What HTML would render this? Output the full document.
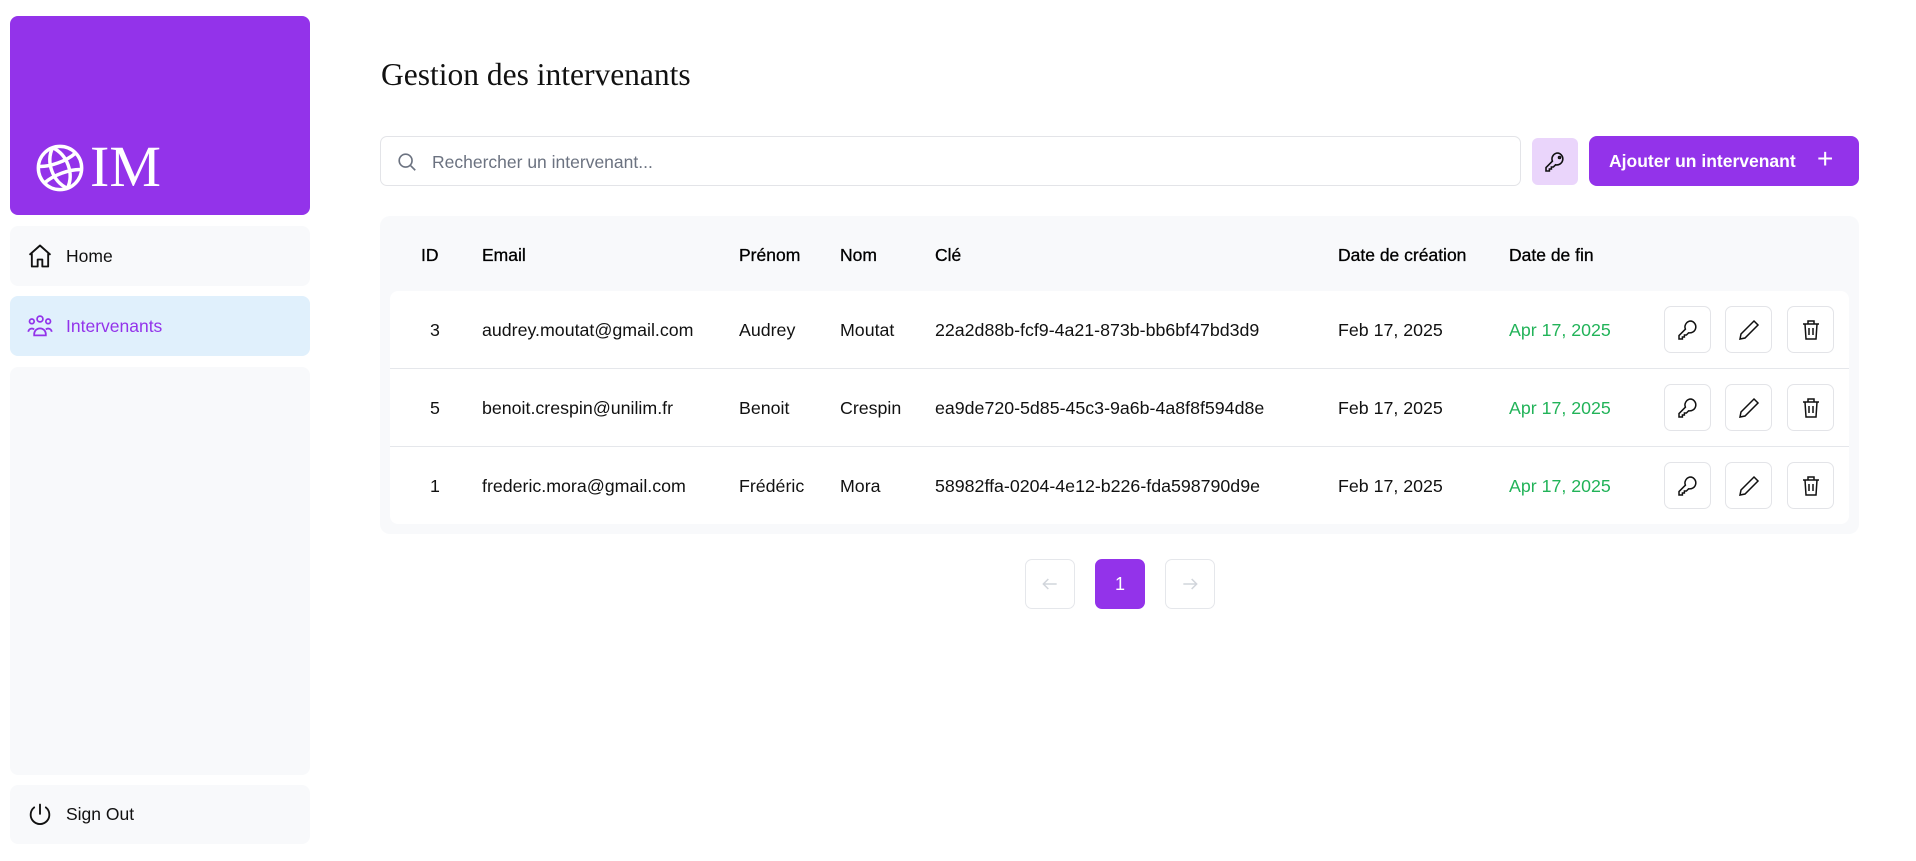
<!DOCTYPE html>
<html><head><meta charset="utf-8"><style>
*{box-sizing:border-box;margin:0;padding:0}
body{width:1916px;height:861px;background:#fff;font-family:"Liberation Sans",sans-serif;color:#111;position:relative;overflow:hidden}
.a{position:absolute}
.card{position:absolute;left:10px;width:300px;background:#f8f9fb;border-radius:8px}
.nav{display:flex;align-items:center;padding-left:16px;font-size:17.5px;gap:12px}
.th{position:absolute;top:245px;font-size:17.5px;color:#000;-webkit-text-stroke:0.3px #000}
.row{position:absolute;left:390px;width:1459px;height:78px;background:#fff;font-size:17.8px}
.row span{position:absolute;top:29px}
.ab{position:absolute;top:15px;width:47px;height:47px;border:1px solid #e3e4e8;border-radius:7px;display:flex;align-items:center;justify-content:center}
.g{color:#22b359}
.pg{position:absolute;top:559px;width:50px;height:50px;border:1px solid #e5e7eb;border-radius:7px;display:flex;align-items:center;justify-content:center}
</style></head><body>
<div class="a" style="left:10px;top:16px;width:300px;height:199px;background:#9333ea;border-radius:8px">
<svg class="a" style="left:24px;top:126px" width="52" height="52" viewBox="0 0 24 24" fill="none" stroke="#fff" stroke-width="1.6"><circle cx="12" cy="12" r="10"/><path d="M12 2c-3 3-4 6.5-4 10s1 7 4 10M12 2c3 3 4 6.5 4 10s-1 7-4 10M3 8c5 2 13 2 18 0M3 16c5-2 13-2 18 0" transform="rotate(-20 12 12)"/></svg>
<div class="a" style="left:80px;top:118px;font-family:'Liberation Serif',serif;font-size:58px;color:#fff;line-height:66px">IM</div>
</div>
<div class="card nav" style="top:226px;height:60px">
<svg width="28" height="28" viewBox="0 0 24 24" fill="none" stroke="#111" stroke-width="1.6" stroke-linejoin="round"><path d="M3 11L12 3l9 8M5 9v12h5v-6h4v6h5V9"/></svg>Home</div>
<div class="card nav" style="top:296px;height:60px;background:#e0f0fc;color:#9333ea">
<svg width="28" height="28" viewBox="0 0 24 24" fill="none" stroke="#9333ea" stroke-width="1.5"><circle cx="12" cy="6" r="2.5"/><circle cx="5" cy="8" r="2"/><circle cx="19" cy="8" r="2"/><path d="M7 19a5 5 0 0110 0v1H7zM2 17a3 3 0 015-2M22 17a3 3 0 00-5-2"/></svg>Intervenants</div>
<div class="card" style="top:367px;height:408px"></div>
<div class="card nav" style="top:785px;height:59px">
<svg width="28" height="28" viewBox="0 0 24 24" fill="none" stroke="#111" stroke-width="1.6" stroke-linecap="round"><path d="M12 3v8M7 5.5a8 8 0 1010 0"/></svg>Sign Out</div>

<div class="a" style="left:381px;top:57px;font-family:'Liberation Serif',serif;font-size:31.5px;color:#111">Gestion des intervenants</div>
<div class="a" style="left:380px;top:136px;width:1141px;height:50px;border:1px solid #e3e4e8;border-radius:7px;font-size:17.5px;color:#6b7280;padding:15px 0 0 51px">Rechercher un intervenant...
<svg class="a" style="left:15px;top:14px" width="22" height="22" viewBox="0 0 24 24" fill="none" stroke="#6b7280" stroke-width="1.8"><circle cx="10.5" cy="10.5" r="7"/><path d="M16 16l5 5"/></svg></div>
<div class="a" style="left:1532px;top:138px;width:46px;height:47px;background:#ead5fb;border-radius:6px;display:flex;align-items:center;justify-content:center">
<svg width="24" height="24" viewBox="0 0 24 24" fill="none" stroke="#111" stroke-width="1.6"><path d="M15 3a6 6 0 00-5.6 8.2L3 17.6V21h3.4v-2h2v-2h2l2.2-2.2A6 6 0 1015 3z"/><circle cx="16.5" cy="7.5" r="1"/></svg></div>
<div class="a" style="left:1589px;top:136px;width:270px;height:50px;background:#9333ea;border-radius:8px;color:#fff;font-size:17.5px;font-weight:bold;padding:15px 0 0 20px">Ajouter un intervenant<span class="a" style="left:228px;top:7px;font-size:28px;font-weight:normal">+</span></div>

<div class="a" style="left:380px;top:216px;width:1479px;height:318px;background:#f8f9fb;border-radius:10px"></div>
<div class="th" style="left:421px">ID</div><div class="th" style="left:482px">Email</div><div class="th" style="left:739px">Prénom</div><div class="th" style="left:840px">Nom</div><div class="th" style="left:935px">Clé</div><div class="th" style="left:1338px">Date de création</div><div class="th" style="left:1509px">Date de fin</div>

<div class="row" style="top:291px;border-radius:8px 8px 0 0;border-bottom:1px solid #e5e7eb"><span style="left:40px">3</span><span style="left:92px">audrey.moutat@gmail.com</span><span style="left:349px">Audrey</span><span style="left:450px">Moutat</span><span style="left:545px">22a2d88b-fcf9-4a21-873b-bb6bf47bd3d9</span><span style="left:948px">Feb 17, 2025</span><span class="g" style="left:1119px">Apr 17, 2025</span>
<div class="ab" style="left:1274px"><svg width="24" height="24" viewBox="0 0 24 24" fill="none" stroke="#111" stroke-width="1.5"><path d="M15 3a6 6 0 00-5.6 8.2L3 17.6V21h3.4v-2h2v-2h2l2.2-2.2A6 6 0 1015 3z"/></svg></div><div class="ab" style="left:1335px"><svg width="24" height="24" viewBox="0 0 24 24" fill="none" stroke="#111" stroke-width="1.5"><path d="M17 3l4 4L8 20l-5 1 1-5z"/></svg></div><div class="ab" style="left:1397px"><svg width="24" height="24" viewBox="0 0 24 24" fill="none" stroke="#111" stroke-width="1.5"><path d="M4 6h16M9 6V3h6v3M6 6l1 15h10l1-15M10 10v7M14 10v7"/></svg></div></div>
<div class="row" style="top:369px;border-bottom:1px solid #e5e7eb"><span style="left:40px">5</span><span style="left:92px">benoit.crespin@unilim.fr</span><span style="left:349px">Benoit</span><span style="left:450px">Crespin</span><span style="left:545px">ea9de720-5d85-45c3-9a6b-4a8f8f594d8e</span><span style="left:948px">Feb 17, 2025</span><span class="g" style="left:1119px">Apr 17, 2025</span>
<div class="ab" style="left:1274px"><svg width="24" height="24" viewBox="0 0 24 24" fill="none" stroke="#111" stroke-width="1.5"><path d="M15 3a6 6 0 00-5.6 8.2L3 17.6V21h3.4v-2h2v-2h2l2.2-2.2A6 6 0 1015 3z"/></svg></div><div class="ab" style="left:1335px"><svg width="24" height="24" viewBox="0 0 24 24" fill="none" stroke="#111" stroke-width="1.5"><path d="M17 3l4 4L8 20l-5 1 1-5z"/></svg></div><div class="ab" style="left:1397px"><svg width="24" height="24" viewBox="0 0 24 24" fill="none" stroke="#111" stroke-width="1.5"><path d="M4 6h16M9 6V3h6v3M6 6l1 15h10l1-15M10 10v7M14 10v7"/></svg></div></div>
<div class="row" style="top:447px;height:77px;border-radius:0 0 8px 8px"><span style="left:40px">1</span><span style="left:92px">frederic.mora@gmail.com</span><span style="left:349px">Frédéric</span><span style="left:450px">Mora</span><span style="left:545px">58982ffa-0204-4e12-b226-fda598790d9e</span><span style="left:948px">Feb 17, 2025</span><span class="g" style="left:1119px">Apr 17, 2025</span>
<div class="ab" style="left:1274px"><svg width="24" height="24" viewBox="0 0 24 24" fill="none" stroke="#111" stroke-width="1.5"><path d="M15 3a6 6 0 00-5.6 8.2L3 17.6V21h3.4v-2h2v-2h2l2.2-2.2A6 6 0 1015 3z"/></svg></div><div class="ab" style="left:1335px"><svg width="24" height="24" viewBox="0 0 24 24" fill="none" stroke="#111" stroke-width="1.5"><path d="M17 3l4 4L8 20l-5 1 1-5z"/></svg></div><div class="ab" style="left:1397px"><svg width="24" height="24" viewBox="0 0 24 24" fill="none" stroke="#111" stroke-width="1.5"><path d="M4 6h16M9 6V3h6v3M6 6l1 15h10l1-15M10 10v7M14 10v7"/></svg></div></div>

<div class="pg" style="left:1025px"><svg width="20" height="20" viewBox="0 0 24 24" fill="none" stroke="#d1d5db" stroke-width="1.8"><path d="M20 12H4M10 6l-6 6 6 6"/></svg></div>
<div class="pg" style="left:1095px;background:#9333ea;border-color:#9333ea;color:#fff;font-size:18px">1</div>
<div class="pg" style="left:1165px"><svg width="20" height="20" viewBox="0 0 24 24" fill="none" stroke="#d1d5db" stroke-width="1.8"><path d="M4 12h16M14 6l6 6-6 6"/></svg></div>
</body></html>
